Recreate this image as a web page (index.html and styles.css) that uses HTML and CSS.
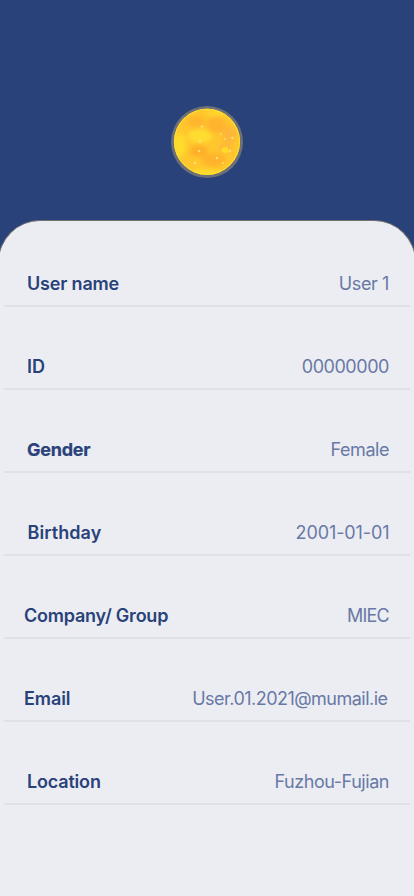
FILE: index.html
```html
<!DOCTYPE html>
<html lang="en">
<head>
<meta charset="utf-8">
<meta name="viewport" content="width=device-width, initial-scale=1">
<title>User profile</title>
<link rel="stylesheet" href="styles.css">
</head>
<body>
<main class="screen">
  <header class="hero">
    <svg class="avatar" viewBox="0 0 72 72" aria-label="Moon avatar">
      <defs>
        <clipPath id="disc"><circle cx="36" cy="36" r="33"/></clipPath>
        <filter id="soft" x="-50%" y="-50%" width="200%" height="200%" color-interpolation-filters="sRGB"><feGaussianBlur stdDeviation="2.2"/></filter>
        <filter id="glow" x="-100%" y="-100%" width="300%" height="300%" color-interpolation-filters="sRGB"><feGaussianBlur stdDeviation="0.7"/></filter>
      </defs>
      <circle cx="36" cy="36" r="36" fill="#6d7078"/>
      <circle cx="36" cy="35.700" r="33" fill="#ffc72d"/>
      <g clip-path="url(#disc)">
        <g filter="url(#soft)">
          <ellipse cx="25" cy="16" rx="9" ry="6" fill="#ffb52c"/>
          <ellipse cx="45" cy="19" rx="10" ry="8" fill="#ffb32f"/>
          <ellipse cx="58" cy="29" rx="7" ry="9" fill="#ffb53b"/>
          <ellipse cx="28" cy="45" rx="9" ry="6" fill="#ffae28"/>
          <ellipse cx="43" cy="54" rx="12" ry="7" fill="#ffb32c"/>
          <ellipse cx="54" cy="42" rx="7" ry="5" fill="#ffb93a"/>
          <ellipse cx="29" cy="30" rx="12" ry="7" fill="#ffdd30"/>
          <ellipse cx="9" cy="39" rx="6" ry="12" fill="#ffdc2c"/>
          <ellipse cx="35" cy="67" rx="16" ry="4" fill="#ffdb2e"/>
          <ellipse cx="45" cy="7" rx="10" ry="3" fill="#ffd82e"/>
        </g>
        <ellipse cx="54" cy="44" rx="3.500" ry="3" fill="#ffdc25" filter="url(#glow)"/>
        <g fill="#ffdf75" filter="url(#glow)">
          <circle cx="31" cy="20.500" r="1.300"/><circle cx="29" cy="35.500" r="1.400"/>
          <circle cx="28" cy="45" r="1.300"/><circle cx="24" cy="57" r="1.300"/>
          <circle cx="46" cy="52" r="1.300"/><circle cx="61.500" cy="32" r="1.300"/>
          <circle cx="50" cy="28" r="1"/><circle cx="54" cy="33" r="1"/>
          <circle cx="59" cy="45" r="1.200"/><circle cx="52" cy="57" r="1"/>
        </g>
      </g>
      <circle cx="36" cy="35.700" r="32.600" fill="none" stroke="#ffe62b" stroke-width="0.900"/>
    </svg>
  </header>
  <section class="sheet">
    <div class="row"><span class="label user">User name</span><span class="value user-value">User 1</span></div>
    <div class="row"><span class="label id">ID</span><span class="value id-value">00000000</span></div>
    <div class="row"><span class="label gender">Gender</span><span class="value gender-value">Female</span></div>
    <div class="row"><span class="label birthday">Birthday</span><span class="value birthday-value">2001-01-01</span></div>
    <div class="row wide"><span class="label company">Company/ Group</span><span class="value company-value">MIEC</span></div>
    <div class="row wide"><span class="label email">Email</span><span class="value email-value">User.01.2021@mumail.ie</span></div>
    <div class="row"><span class="label location">Location</span><span class="value location-value">Fuzhou-Fujian</span></div>
  </section>
</main>
</body>
</html>
```
FILE: styles.css
```css
* { box-sizing: border-box; }
body { margin: 0; font-family: Inter, "Liberation Sans", sans-serif; }
.screen { width: 414px; height: 896px; overflow: hidden; background: #294279; display: flex; flex-direction: column; }
.hero { height: 220px; flex: none; display: flex; justify-content: center; padding-top: 106px; }
.avatar { width: 72px; height: 72px; }
.sheet { flex: 1; margin: 0 -2px; padding: 3px 5px 0; background: #ecedf3; border: 1px solid #707070; border-bottom: 0; border-radius: 42px 42px 0 0; }
.row { height: 83px; display: flex; align-items: flex-end; justify-content: space-between; padding: 0 21px 8px 23px; border-bottom: 2px solid #e0e1e6; white-space: nowrap; font-size: 18px; line-height: 26px; }
.wide { padding-left: 20px; }
.label { color: #294279; font-weight: 600; letter-spacing: -0.18px; }
.id { letter-spacing: 0.1px; }
.gender { font-weight: 700; letter-spacing: -0.25px; -webkit-text-stroke: 0.2px #294279; }
.birthday { margin-left: 0.5px; letter-spacing: 0.07px; }
.company { letter-spacing: -0.22px; }
.email { letter-spacing: -0.1px; }
.value { color: #6879a5; font-weight: 400; letter-spacing: -0.45px; }
.user-value { letter-spacing: -0.4px; }
.birthday-value { margin-right: -0.5px; letter-spacing: -0.1px; }
.company-value { letter-spacing: -0.75px; }
.email-value { margin-right: 1.5px; letter-spacing: -0.52px; }
```
